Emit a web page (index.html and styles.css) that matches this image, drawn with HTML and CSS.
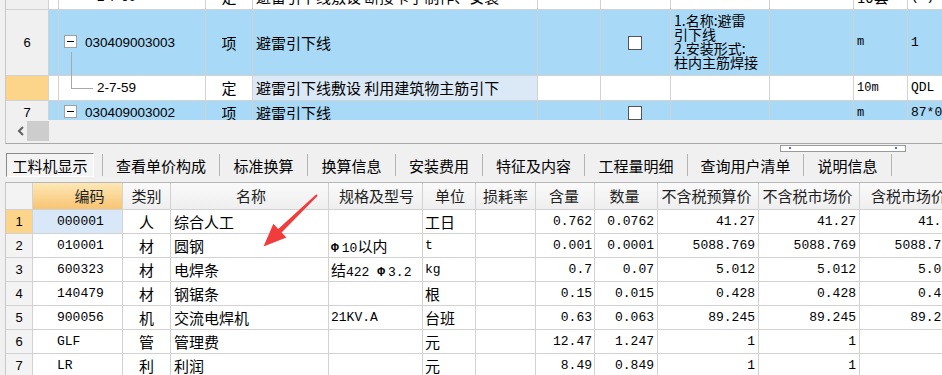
FILE: index.html
```html
<!DOCTYPE html>
<html lang="zh-CN">
<head>
    <meta charset="UTF-8">
    <title>工料机显示</title>
    <link rel="stylesheet" href="styles.css">
</head>
<body>
<div class="page">
    <div class="top-panel">
        <div class="grid-view">
            <div class="tgrid">
                <div class="trow r-prev">
                    <div class="cell c-no hdr"></div>
                    <div class="cell c-ind"></div>
                    <div class="cell c-code"><span class="sub-code">2-7-60</span></div>
                    <div class="cell c-type cn">定</div>
                    <div class="cell c-name cn">避雷引下线敷设 断接卡子制作、安装</div>
                    <div class="cell c-x1"></div>
                    <div class="cell c-chk"></div>
                    <div class="cell c-desc"></div>
                    <div class="cell c-x2"></div>
                    <div class="cell c-unit cn">10套</div>
                    <div class="cell c-qty mono">(3)*0</div>
                </div>
                <div class="trow r-item">
                    <div class="cell c-no hdr">6</div>
                    <div class="cell c-ind"></div>
                    <div class="cell c-code tree-open"><span class="toggle"></span>030409003003</div>
                    <div class="cell c-type cn">项</div>
                    <div class="cell c-name cn">避雷引下线</div>
                    <div class="cell c-x1"></div>
                    <div class="cell c-chk"><span class="checkbox"></span></div>
                    <div class="cell c-desc">1.名称:避雷<br>引下线<br>2.安装形式:<br>柱内主筋焊接</div>
                    <div class="cell c-x2"></div>
                    <div class="cell c-unit small">m</div>
                    <div class="cell c-qty mono">1</div>
                </div>
                <div class="trow r-sub">
                    <div class="cell c-no hdr mark"></div>
                    <div class="cell c-ind"></div>
                    <div class="cell c-code tree-leaf"><span class="sub-code">2-7-59</span></div>
                    <div class="cell c-type cn">定</div>
                    <div class="cell c-name cn focus">避雷引下线敷设 利用建筑物主筋引下</div>
                    <div class="cell c-x1"></div>
                    <div class="cell c-chk"></div>
                    <div class="cell c-desc"></div>
                    <div class="cell c-x2"></div>
                    <div class="cell c-unit small">10m</div>
                    <div class="cell c-qty mono">QDL</div>
                </div>
                <div class="trow r-item r-last">
                    <div class="cell c-no hdr">7</div>
                    <div class="cell c-ind"></div>
                    <div class="cell c-code"><span class="toggle"></span>030409003002</div>
                    <div class="cell c-type cn">项</div>
                    <div class="cell c-name cn">避雷引下线</div>
                    <div class="cell c-x1"></div>
                    <div class="cell c-chk"><span class="checkbox"></span></div>
                    <div class="cell c-desc"></div>
                    <div class="cell c-x2"></div>
                    <div class="cell c-unit small">m</div>
                    <div class="cell c-qty mono">87*0</div>
                </div>
            </div>
        </div>
        <div class="hscroll">
            <svg class="scroll-left" width="8" height="10" viewBox="0 0 8 10">
                <polyline points="6,1 2,5 6,9" fill="none" stroke="#606060" stroke-width="2"/>
            </svg>
            <span class="thumb"></span>
        </div>
    </div>

    <div class="middle">
        <div class="grip"><i></i><i></i></div>
        <div class="tabs">
            <div class="tab active">工料机显示</div>
            <div class="tab" style="width:117px">查看单价构成</div>
            <div class="tab" style="width:88px">标准换算</div>
            <div class="tab" style="width:88px">换算信息</div>
            <div class="tab" style="width:87px">安装费用</div>
            <div class="tab" style="width:102px">特征及内容</div>
            <div class="tab" style="width:103px">工程量明细</div>
            <div class="tab" style="width:116px">查询用户清单</div>
            <div class="tab last" style="width:89px">说明信息</div>
        </div>
    </div>

    <div class="bgrid">
        <div class="brow head">
            <div class="cell b-no"></div>
            <div class="cell b-code sorted">编码</div>
            <div class="cell b-type">类别</div>
            <div class="cell b-name center">名称</div>
            <div class="cell b-spec center">规格及型号</div>
            <div class="cell b-unit center">单位</div>
            <div class="cell b-loss center">损耗率</div>
            <div class="cell b-num center">含量</div>
            <div class="cell b-qty center">数量</div>
            <div class="cell b-price center">不含税预算价</div>
            <div class="cell b-price center">不含税市场价</div>
            <div class="cell b-price center">含税市场价</div>
        </div>
        <div class="brow">
            <div class="cell b-no current">1</div>
            <div class="cell b-code mono active-cell">000001</div>
            <div class="cell b-type">人</div>
            <div class="cell b-name">综合人工</div>
            <div class="cell b-spec"></div>
            <div class="cell b-unit">工日</div>
            <div class="cell b-loss"></div>
            <div class="cell b-num mono">0.762</div>
            <div class="cell b-qty mono">0.0762</div>
            <div class="cell b-price mono">41.27</div>
            <div class="cell b-price mono">41.27</div>
            <div class="cell b-price mono">41.27</div>
        </div>
        <div class="brow">
            <div class="cell b-no">2</div>
            <div class="cell b-code mono">010001</div>
            <div class="cell b-type">材</div>
            <div class="cell b-name">圆钢</div>
            <div class="cell b-spec"><span class="mono phi">Φ</span><span class="mono">10</span>以内</div>
            <div class="cell b-unit mono">t</div>
            <div class="cell b-loss"></div>
            <div class="cell b-num mono">0.001</div>
            <div class="cell b-qty mono">0.0001</div>
            <div class="cell b-price mono">5088.769</div>
            <div class="cell b-price mono">5088.769</div>
            <div class="cell b-price mono">5088.769</div>
        </div>
        <div class="brow">
            <div class="cell b-no">3</div>
            <div class="cell b-code mono">600323</div>
            <div class="cell b-type">材</div>
            <div class="cell b-name">电焊条</div>
            <div class="cell b-spec">结<span class="mono">422 </span><span class="mono phi">Φ</span><span class="mono">3.2</span></div>
            <div class="cell b-unit mono">kg</div>
            <div class="cell b-loss"></div>
            <div class="cell b-num mono">0.7</div>
            <div class="cell b-qty mono">0.07</div>
            <div class="cell b-price mono">5.012</div>
            <div class="cell b-price mono">5.012</div>
            <div class="cell b-price mono">5.012</div>
        </div>
        <div class="brow">
            <div class="cell b-no">4</div>
            <div class="cell b-code mono">140479</div>
            <div class="cell b-type">材</div>
            <div class="cell b-name">钢锯条</div>
            <div class="cell b-spec"></div>
            <div class="cell b-unit">根</div>
            <div class="cell b-loss"></div>
            <div class="cell b-num mono">0.15</div>
            <div class="cell b-qty mono">0.015</div>
            <div class="cell b-price mono">0.428</div>
            <div class="cell b-price mono">0.428</div>
            <div class="cell b-price mono">0.428</div>
        </div>
        <div class="brow">
            <div class="cell b-no">5</div>
            <div class="cell b-code mono">900056</div>
            <div class="cell b-type">机</div>
            <div class="cell b-name">交流电焊机</div>
            <div class="cell b-spec mono">21KV.A</div>
            <div class="cell b-unit">台班</div>
            <div class="cell b-loss"></div>
            <div class="cell b-num mono">0.63</div>
            <div class="cell b-qty mono">0.063</div>
            <div class="cell b-price mono">89.245</div>
            <div class="cell b-price mono">89.245</div>
            <div class="cell b-price mono">89.245</div>
        </div>
        <div class="brow">
            <div class="cell b-no">6</div>
            <div class="cell b-code mono">GLF</div>
            <div class="cell b-type">管</div>
            <div class="cell b-name">管理费</div>
            <div class="cell b-spec"></div>
            <div class="cell b-unit">元</div>
            <div class="cell b-loss"></div>
            <div class="cell b-num mono">12.47</div>
            <div class="cell b-qty mono">1.247</div>
            <div class="cell b-price mono">1</div>
            <div class="cell b-price mono">1</div>
            <div class="cell b-price mono"></div>
        </div>
        <div class="brow">
            <div class="cell b-no">7</div>
            <div class="cell b-code mono">LR</div>
            <div class="cell b-type">利</div>
            <div class="cell b-name">利润</div>
            <div class="cell b-spec"></div>
            <div class="cell b-unit">元</div>
            <div class="cell b-loss"></div>
            <div class="cell b-num mono">8.49</div>
            <div class="cell b-qty mono">0.849</div>
            <div class="cell b-price mono">1</div>
            <div class="cell b-price mono">1</div>
            <div class="cell b-price mono"></div>
        </div>
    </div>

    <!-- red pointer drawn over the material grid -->
    <svg class="pointer" width="942" height="375" viewBox="0 0 942 375">
        <polygon points="316.3,194.3 278.2,228.9 273.4,223.8 263.5,246.5 286.4,237.6 281.6,232.5 317.7,195.7" fill="#f23b3b"/>
    </svg>
</div>
</body>
</html>
```

FILE: styles.css
```css
html, body {
    margin: 0;
    padding: 0;
    background: #f0f0f0;
}
body {
    font-family: "Noto Sans CJK SC", "Liberation Sans", sans-serif;
    font-size: 15px;
    color: #000;
}
.page {
    position: relative;
    width: 942px;
    height: 375px;
    overflow: hidden;
}
.mono {
    font-family: "Liberation Mono", "Noto Sans CJK SC", monospace;
    font-size: 13px;
}
.phi {
    font-weight: bold;
    padding-right: 3px;
}
.cell {
    box-sizing: border-box;
    flex: none;
    border-right: 1px solid #d2d2d2;
    border-bottom: 1px solid #d2d2d2;
    white-space: nowrap;
    overflow: hidden;
}

/* upper grid (bill items) */
.top-panel {
    margin-left: 5px;
    border-left: 1px solid #c8c8c8;
    border-bottom: 1px solid #a8a8a8;
    background: #fff;
}
.grid-view {
    height: 120px;
    overflow: hidden;
}
.tgrid {
    margin-top: -15px;
}
.trow {
    display: flex;
    height: 25px;
    line-height: 24px;
    background: #fff;
}
.trow.r-item {
    height: 66px;
    line-height: 65px;
    background: #a8d9f7;
}
.trow.r-last {
    height: 25px;
    line-height: 24px;
}
.trow .hdr {
    background: #f0f0f0;
    text-align: center;
    font-family: "Liberation Sans", sans-serif;
    font-size: 13px;
}
.trow .hdr.mark {
    background: #fdd58a;
}
.c-no { width: 43px; }
.c-ind { width: 10px; }
.c-code {
    width: 147px;
    position: relative;
    padding-left: 26px;
    font-family: "Liberation Sans", sans-serif;
    font-size: 13.5px;
    overflow: visible;
}
.c-type { width: 47px; text-align: center; }
.c-name { width: 285px; padding-left: 3px; }
.c-name.focus { background: #dbe9f6; }
.c-x1 { width: 63px; }
.c-chk { width: 70px; position: relative; }
.c-desc {
    width: 99px;
    padding: 3px 0 0 3px;
    font-size: 14px;
    line-height: 14px;
    white-space: normal;
}
.c-x2 { width: 84px; }
.c-unit { width: 54px; padding-left: 3px; }
.c-unit.small {
    font-family: "Liberation Mono", monospace;
    font-size: 12px;
}
.c-qty { width: 120px; padding-left: 3px; border-right: none; }

.sub-code {
    padding-left: 12px;
}
.toggle {
    position: absolute;
    left: 5px;
    top: 50%;
    width: 13px;
    height: 13px;
    margin-top: -8px;
    box-sizing: border-box;
    border: 1px solid #a0a0a0;
    background: #fff;
}
.toggle::after {
    content: "";
    position: absolute;
    left: 2px;
    top: 5px;
    width: 7px;
    height: 1px;
    background: #000;
}
.tree-open::after {
    content: "";
    position: absolute;
    left: 12px;
    top: 42px;
    height: 24px;
    border-left: 1px solid #a8a8a8;
}
.tree-leaf::after {
    content: "";
    position: absolute;
    left: 12px;
    top: -1px;
    width: 21px;
    height: 13px;
    border-left: 1px solid #a8a8a8;
    border-bottom: 1px solid #a8a8a8;
}
.checkbox {
    position: absolute;
    left: 27px;
    top: 50%;
    width: 14px;
    height: 14px;
    margin-top: -7px;
    box-sizing: border-box;
    border: 1px solid #555;
    background: #fff;
}

.hscroll {
    position: relative;
    height: 23px;
    background: #f0f0f0;
}
.scroll-left {
    position: absolute;
    left: 11px;
    top: 6px;
}
.thumb {
    position: absolute;
    left: 21px;
    top: 1px;
    width: 22px;
    height: 20px;
    background: #cdcdcd;
}

/* tab strip */
.middle {
    height: 37px;
}
.grip {
    position: relative;
    width: 124px;
    height: 5px;
    margin: 1px 0 0 780px;
    border: 1px solid #9a9a9a;
    background: #fff;
}
.grip i {
    position: absolute;
    top: 1px;
    left: 8px;
    width: 2px;
    height: 2px;
    background: #5a6cd0;
}
.grip i + i {
    left: 114px;
}
.tabs {
    display: flex;
    height: 24px;
    margin-top: 1px;
    line-height: 23px;
}
.tab {
    box-sizing: border-box;
    flex: none;
    border-left: 1px solid #b4b4b4;
    text-align: center;
    margin-top: 1px;
    height: 22px;
}
.tab.last {
    border-right: 1px solid #b4b4b4;
}
.tab.active {
    width: 88px;
    height: 24px;
    margin: 0 8px 0 6px;
    border-top: 1px solid #8a8a8a;
    border-left: 1px solid #8a8a8a;
    border-right: 1px solid #fff;
    border-bottom: 1px solid #fff;
    background: #f4f4f4;
}

/* lower grid (materials) */
.bgrid {
    margin-left: 5px;
    border-left: 1px solid #c8c8c8;
    border-top: 1px solid #b8b8b8;
    background: #fff;
}
.brow {
    display: flex;
    height: 24px;
    line-height: 23px;
}
.brow.head {
    height: 27px;
    line-height: 26px;
    background: linear-gradient(#fafafa, #eeeeee);
}
.brow.head .cell {
    text-align: center;
    color: #222;
}
.brow.head .sorted {
    background: linear-gradient(#fde8b6, #f7c472);
}
.b-no {
    width: 27px;
    text-align: center;
    background: #f3f3f3;
    font-family: "Liberation Sans", sans-serif;
    font-size: 13px;
}
.b-no.current { background: #fdd58a; }
.b-code { width: 90px; padding-left: 24px; }
.b-code.active-cell { background: #d8e8f8; }
.b-type { width: 48px; text-align: center; }
.b-name { width: 158px; padding-left: 3px; }
.b-spec { width: 94px; padding-left: 2px; }
.b-unit { width: 53px; padding-left: 2px; }
.b-loss { width: 60px; }
.b-num { width: 59px; text-align: right; padding-right: 2px; }
.b-qty { width: 63px; text-align: right; padding-right: 3px; }
.b-price { width: 101px; text-align: right; padding-right: 3px; }
.center { text-align: center; }

.pointer {
    position: absolute;
    left: 0;
    top: 0;
    pointer-events: none;
}
```
